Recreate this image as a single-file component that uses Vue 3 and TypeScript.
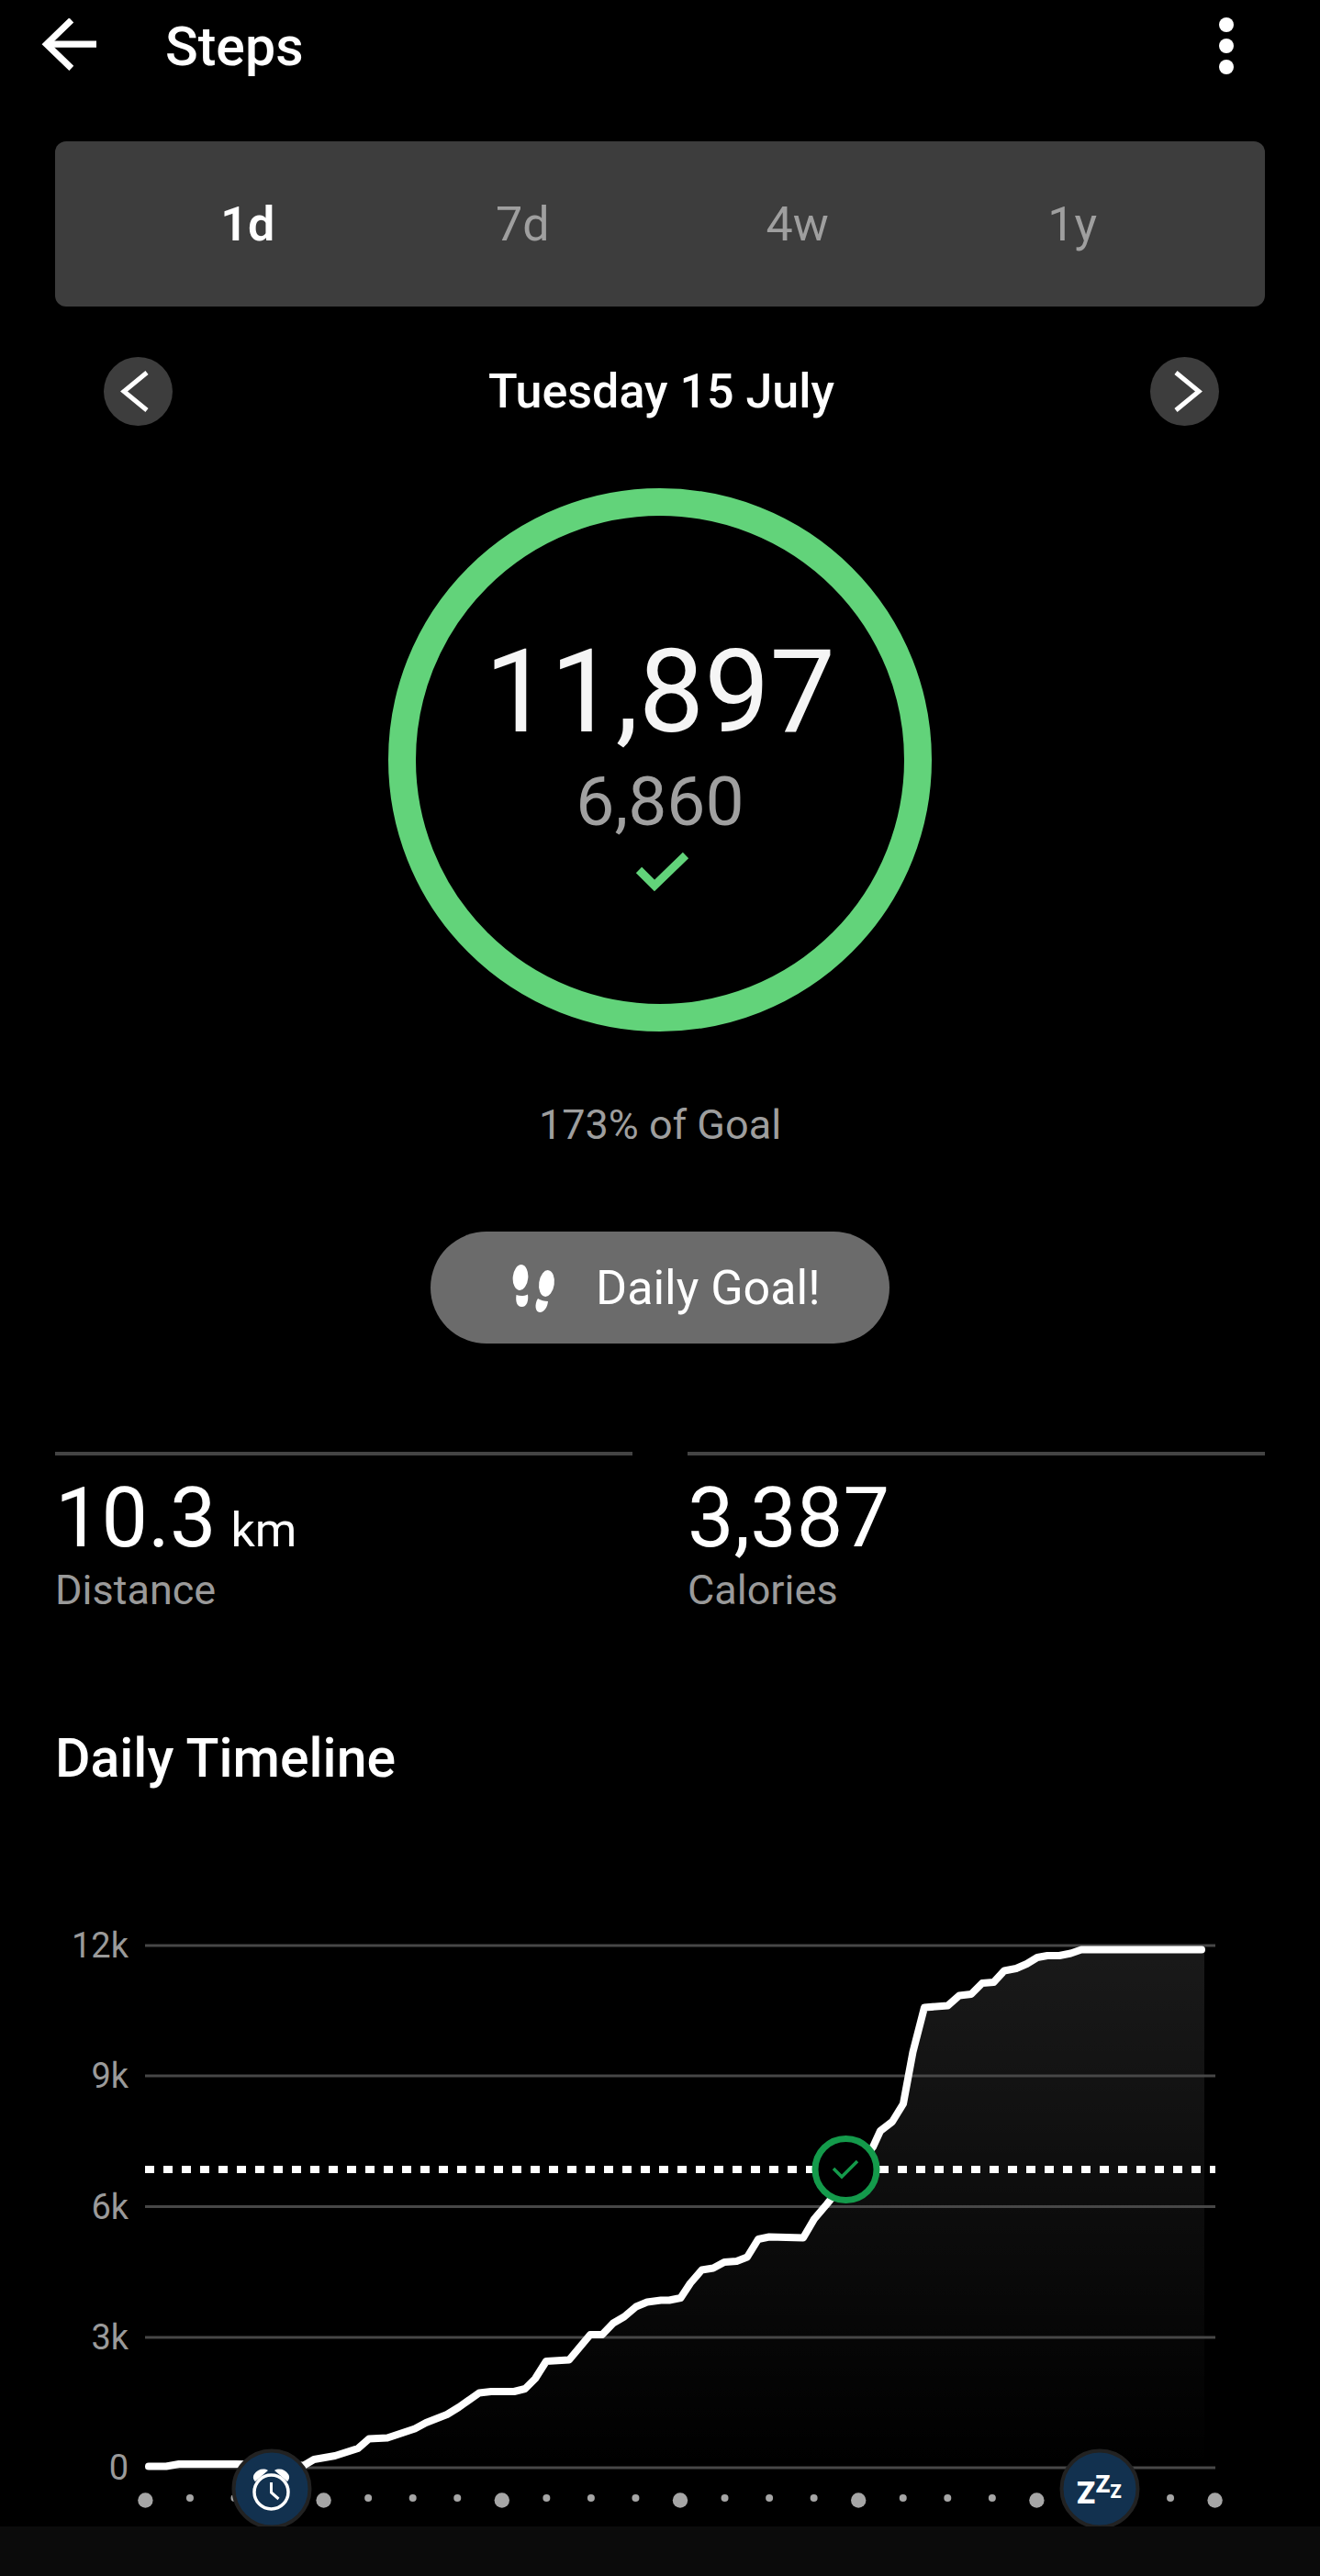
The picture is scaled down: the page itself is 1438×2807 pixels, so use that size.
<template>
  <div class="page">
    <header class="top-bar">
      <svg class="back-icon" viewBox="0 0 64 64" fill="none" stroke="#fff" stroke-width="7.5">
        <path d="M64 30H6" />
        <path d="M35 2 6 30l29 28" />
      </svg>
      <h1 class="title">Steps</h1>
      <svg class="more-icon" viewBox="0 0 16 62" fill="#fff">
        <circle cx="8" cy="8" r="8" />
        <circle cx="8" cy="31" r="8" />
        <circle cx="8" cy="54" r="8" />
      </svg>
    </header>

    <nav class="tabs">
      <span v-for="tab in tabs" :key="tab" class="tab" :class="{ active: tab === '1d' }">{{ tab }}</span>
    </nav>

    <div class="date-row">
      <button class="nav-btn">
        <svg viewBox="0 0 75 75" fill="none" stroke="#fff" stroke-width="5">
          <path d="M47 17 22 37.500 47 58" />
        </svg>
      </button>
      <span class="date">Tuesday 15 July</span>
      <button class="nav-btn">
        <svg viewBox="0 0 75 75" fill="none" stroke="#fff" stroke-width="5">
          <path d="m28 17 25 20.500L28 58" />
        </svg>
      </button>
    </div>

    <div class="ring">
      <div class="steps">11,897</div>
      <div class="goal">6,860</div>
      <svg class="goal-check" viewBox="0 0 60 40" fill="none" stroke="#62d37a" stroke-width="9">
        <path d="m7 20 17 17 34-33" />
      </svg>
    </div>

    <p class="percent">173% of Goal</p>

    <div class="goal-pill">
      <svg class="feet" viewBox="0 0 48 54" fill="#fff">
        <ellipse cx="9" cy="16" rx="8.300" ry="14" transform="rotate(5 9 16)" />
        <path d="M4.500 35c4 1.500 8 1.500 12.500-.5 1 7-1 13.500-6.500 13.500S3.500 42 4.500 35z" />
        <ellipse cx="37.500" cy="22.500" rx="8.300" ry="14.500" transform="rotate(8 37.500 22.500)" />
        <path d="M28 39c3 2 7 3 11 3-.5 6-4 12-9 12-5 0-6-9-2-15z" />
      </svg>
      <span>Daily Goal!</span>
    </div>

    <section class="stats">
      <div v-for="stat in stats" :key="stat.label" class="stat">
        <div class="stat-value">{{ stat.value }}<small v-if="stat.unit">{{ stat.unit }}</small></div>
        <div class="stat-label">{{ stat.label }}</div>
      </div>
    </section>

    <h2 class="section-title">Daily Timeline</h2>

    <!-- viewBox keeps page coordinates so the chart points read directly -->
    <svg class="chart" viewBox="0 2090 1438 663">
      <defs>
        <linearGradient id="area" x1="0" y1="0" x2="0" y2="1">
          <stop offset="0" stop-color="#fff" stop-opacity="0.1" />
          <stop offset="1" stop-color="#fff" stop-opacity="0" />
        </linearGradient>
      </defs>

      <path :d="areaPath" fill="url(#area)" />

      <g v-for="row in gridRows" :key="row.label">
        <line x1="158" :x2="1324" :y1="row.y" :y2="row.y" stroke="#474747" stroke-width="3" />
        <text class="axis-label" x="140" :y="row.y + 13" text-anchor="end">{{ row.label }}</text>
      </g>

      <line x1="158" x2="1324" y1="2364" y2="2364" stroke="#fff" stroke-width="8" stroke-dasharray="10 10" />
      <polyline :points="linePoints" fill="none" stroke="#fff" stroke-width="8" stroke-linejoin="round" stroke-linecap="round" />

      <circle cx="921.500" cy="2364" r="33.500" fill="#000" stroke="#149a4b" stroke-width="7" />
      <path d="m908 2363 9 9 17-17" fill="none" stroke="#149a4b" stroke-width="3.500" />

      <circle
        v-for="dot in axisDots"
        :key="dot.x"
        :cx="dot.x"
        :cy="dot.big ? 2724.5 : 2722"
        :r="dot.big ? 8.2 : 4"
        fill="#a6a6a6"
      />

      <g>
        <circle cx="296" cy="2712" r="41.500" fill="#12314f" stroke="#222" stroke-width="4" />
        <g fill="none" stroke="#fff">
          <circle cx="295.500" cy="2715.500" r="18.500" stroke-width="3.500" />
          <path d="M295.500 2705v11l8 7" stroke-width="3" />
        </g>
        <path d="M277 2696c3-5 10-7 15-4l-14 12c-2-2-3-5-1-8zM314 2696c-3-5-10-7-15-4l14 12c2-2 3-5 1-8z" fill="#fff" />
      </g>

      <g>
        <circle cx="1198" cy="2712" r="41.500" fill="#12314f" stroke="#222" stroke-width="4" />
        <g class="zzz">
          <text x="1173" y="2727.500" font-size="33">Z</text>
          <text x="1193.500" y="2716" font-size="26">Z</text>
          <text x="1209.500" y="2722" font-size="20">Z</text>
        </g>
      </g>
    </svg>

    <div class="bottom-bar"></div>
  </div>
</template>

<script setup lang="ts">
import { computed } from 'vue'

const tabs = ['1d', '7d', '4w', '1y']

const stats = [
  { value: '10.3', unit: 'km', label: 'Distance' },
  { value: '3,387', unit: '', label: 'Calories' }
]

const gridRows = [
  { label: '12k', y: 2120 },
  { label: '9k', y: 2262 },
  { label: '6k', y: 2404.5 },
  { label: '3k', y: 2547 },
  { label: '0', y: 2689 }
]

// cumulative steps over the day, traced in page pixels
const stepLine: [number, number][] = [
  [162, 2687.5], [181, 2687.5], [195, 2685], [257, 2685], [331, 2686.5], [342, 2680], [365, 2676], [390, 2668],
  [402, 2657.5], [422, 2656.5], [452, 2646.5], [464, 2640], [487, 2631], [500, 2623], [522, 2607.5], [535, 2606],
  [560, 2606], [572, 2603], [583, 2592], [595, 2573], [620, 2571.5], [643, 2544], [656, 2544], [668, 2531.5],
  [680, 2524.5], [693, 2513.5], [705, 2508.5], [720, 2506.5], [729, 2506.5], [741.5, 2504], [752, 2488], [764.5, 2473.5],
  [777, 2471.5], [789, 2465], [802.5, 2464], [814, 2459.5], [826, 2440], [838, 2437.5], [875, 2438.5], [887, 2418],
  [901, 2401.5], [951, 2339.5], [959, 2322], [972, 2312], [984, 2292.5], [994.5, 2236], [1007, 2187.5], [1032.5, 2185.5],
  [1045, 2174.5], [1058, 2173], [1070, 2161], [1082.5, 2160], [1094, 2147.5], [1107, 2145], [1118.5, 2140], [1130, 2133],
  [1141, 2131], [1154, 2131], [1166.5, 2128.5], [1178, 2124.5], [1309, 2124.5]
]

const linePoints = computed(() => stepLine.map(([x, y]) => `${x},${y}`).join(' '))

const areaPath = computed(() => `M${stepLine.map(([x, y]) => `${x} ${y}`).join('L')}L1312 2124.5L1312 2689L162 2689Z`)

// big dot every 4th tick, 48.5px apart
const axisDots = computed(() =>
  Array.from({ length: 25 }, (_, i) => ({ x: 158.4 + i * 48.55, big: i % 4 === 0 }))
)
</script>

<style scoped>
.page {
  width: 1438px;
  height: 2807px;
  overflow: hidden;
  background: #000;
  color: #fff;
  font-family: Roboto, "Liberation Sans", sans-serif;
}

.top-bar {
  height: 100px;
  display: flex;
  align-items: center;
  padding: 0 94px 0 44px;
}

.back-icon {
  width: 62px;
  height: 60px;
  flex-shrink: 0;
}

.title {
  flex: 1;
  margin: 0 0 0 74px;
  font-size: 59px;
  font-weight: 500;
  line-height: 1;
}

.more-icon {
  width: 16px;
  height: 62px;
}

.tabs {
  margin: 54px 60px 0;
  height: 180px;
  padding: 0 60px 0;
  box-sizing: border-box;
  display: grid;
  grid-template-columns: repeat(4, 1fr);
  align-items: center;
  background: #3d3d3d;
  border-radius: 12px;
}

.tab {
  text-align: center;
  font-size: 52px;
  color: #9f9f9f;
}

.tab.active {
  color: #fff;
  font-weight: 600;
}

.date-row {
  margin-top: 55px;
  padding: 0 110px 0 113px;
  display: flex;
  align-items: center;
  justify-content: space-between;
}

.nav-btn {
  width: 75px;
  height: 75px;
  padding: 0;
  border: none;
  border-radius: 50%;
  background: #3d3d3d;
}

.nav-btn svg {
  display: block;
  width: 75px;
  height: 75px;
}

.date {
  font-size: 52px;
  font-weight: 500;
}

.ring {
  box-sizing: border-box;
  width: 592px;
  height: 592px;
  margin: 68px auto 0;
  border: 30px solid #62d37a;
  border-radius: 50%;
  display: flex;
  flex-direction: column;
  align-items: center;
}

.steps {
  margin-top: 117px;
  font-size: 127px;
  line-height: 149px;
  color: #f5f5f5;
}

.goal {
  font-size: 75px;
  line-height: 90px;
  color: #a0a0a0;
}

.goal-check {
  width: 60px;
  height: 40px;
  margin-top: 10px;
  overflow: visible;
}

.percent {
  margin: 76px 0 0;
  text-align: center;
  font-size: 45px;
  line-height: 52px;
  color: #9e9e9e;
}

.goal-pill {
  box-sizing: border-box;
  width: 500px;
  height: 122px;
  margin: 90px auto 0;
  padding-left: 89px;
  display: flex;
  align-items: center;
  gap: 43px;
  background: #6b6b6b;
  border-radius: 61px;
  font-size: 52px;
}

.feet {
  width: 48px;
  height: 54px;
}

.stats {
  margin: 118px 60px 0;
  display: grid;
  grid-template-columns: 1fr 1fr;
  gap: 60px;
}

.stat {
  border-top: 4px solid #444;
  padding-top: 24px;
}

.stat-value {
  font-size: 90px;
  line-height: 90px;
}

.stat-value small {
  margin-left: 16px;
  font-size: 52px;
  line-height: 1;
}

.stat-label {
  margin-top: 7px;
  font-size: 45px;
  line-height: 52px;
  color: #9a9a9a;
}

.section-title {
  margin: 123px 0 0 60px;
  font-size: 59px;
  font-weight: 500;
  line-height: 68px;
}

.chart {
  display: block;
  width: 1438px;
  height: 663px;
  margin-top: 140px;
}

.axis-label {
  font-size: 38px;
  fill: #9a9a9a;
}

.zzz text {
  font-weight: 900;
  fill: #fff;
}

.bottom-bar {
  height: 54px;
  background: #0b0b0b;
}
</style>

<style>
html,
body {
  background: #000;
}
</style>
